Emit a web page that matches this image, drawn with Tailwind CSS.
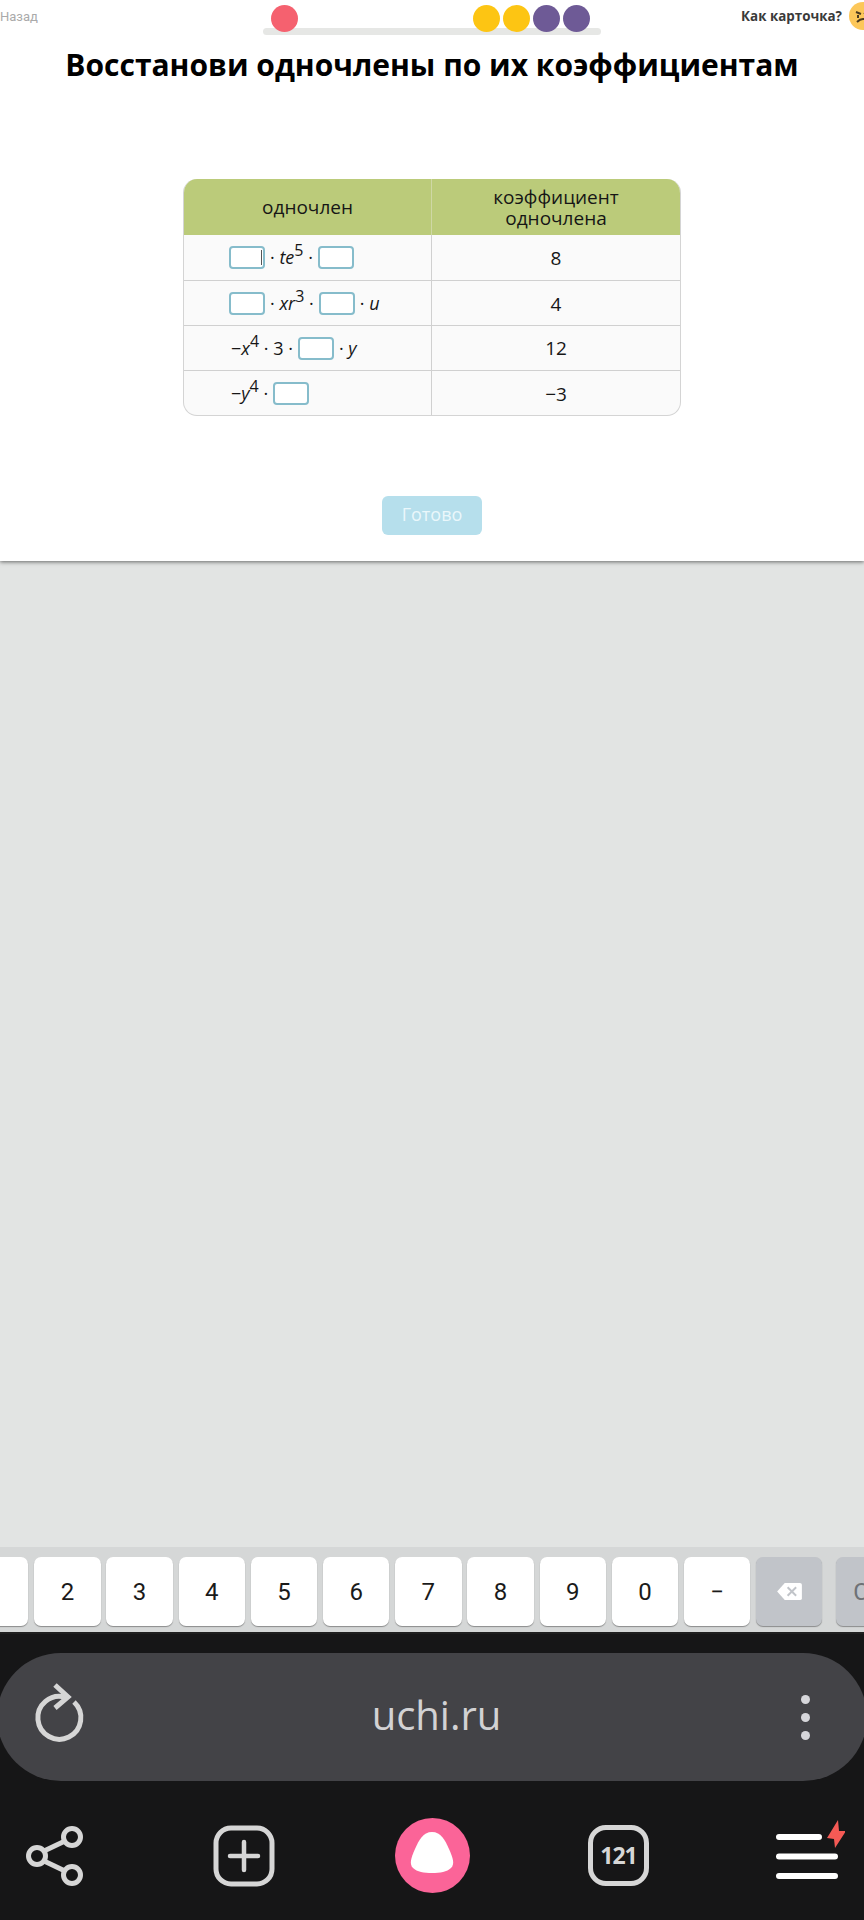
<!DOCTYPE html>
<html lang="ru">
<head>
    <meta charset="UTF-8">
    <title>uchi.ru</title>
    <script src="https://cdn.jsdelivr.net/npm/@tailwindcss/browser@4"></script>
</head>
<body class="w-[864px] h-[1920px] overflow-hidden flex flex-col bg-[#161617] font-['Open_Sans',sans-serif]">
    <!-- Card -->
    <section class="relative z-10 h-[561px] shrink-0 bg-white shadow-[0_1px_4px_rgba(0,0,0,0.55)] flex flex-col">
        <div class="relative h-[36px] flex justify-between items-start">
            <span class="mt-[8px] text-[13px] leading-[18px] text-[#aaaaaa] font-['Roboto',sans-serif]">Назад</span>
            <div class="absolute left-[263px] top-[28px] w-[338px] h-[7px] rounded-[4px] bg-[#e6e7e5]"></div>
            <div class="absolute left-[271px] top-[5px] w-[27px] h-[27px] rounded-full bg-[#f5616f]"></div>
            <div class="absolute left-[473px] top-[5px] w-[27px] h-[27px] rounded-full bg-[#fdc513]"></div>
            <div class="absolute left-[503px] top-[5px] w-[27px] h-[27px] rounded-full bg-[#fdc513]"></div>
            <div class="absolute left-[533px] top-[5px] w-[27px] h-[27px] rounded-full bg-[#6e5a96]"></div>
            <div class="absolute left-[563px] top-[5px] w-[27px] h-[27px] rounded-full bg-[#6e5a96]"></div>
            <div class="mt-[2px] flex items-center gap-[7px] mr-[-13px]">
                <span class="text-[13.4px] leading-[18px] font-bold text-[#3a3a3a]">Как карточка?</span>
                <svg width="28" height="28" viewBox="0 0 28 28">
                    <circle cx="14" cy="14" r="14" fill="#fcc75a"/>
                    <path d="M7 10l5 2M20 8l-5 4M8 20q6-6 12 0M9 13v3M18 13v3" fill="none" stroke="#4a3a20" stroke-width="2"/>
                </svg>
            </div>
        </div>
        <h1 class="mt-[10px] text-center text-[30px] leading-[38px] font-bold text-black">Восстанови одночлены по их коэффициентам</h1>

        <!-- Table -->
        <div class="mt-[95px] mx-auto w-[498px] rounded-[14px] border-x border-b border-[#d4d4d4] overflow-hidden text-[19px] text-[#161616] bg-[#fafafa] box-border">
            <div class="grid grid-cols-[248px_1fr] h-[56px] bg-[#bbcb7a] text-center">
                <div class="flex items-center justify-center border-r border-[#cfd8a5]">одночлен</div>
                <div class="flex items-center justify-center pt-[2px] leading-[21px]">коэффициент<br>одночлена</div>
            </div>
            <div class="grid grid-cols-[248px_1fr] h-[45px]">
                <div class="flex items-center pl-[45px] gap-[5px] text-[18px] border-r border-[#d0d0d0]">
                    <span class="relative w-[36px] h-[23px] rounded-[4px] border-2 border-[#86bccb] bg-white"><span class="absolute right-[1px] top-[2px] w-[1px] h-[15px] bg-[#555555]"></span></span>
                    <span>· <i>te</i><sup class="text-[16px]">5</sup> ·</span>
                    <span class="w-[36px] h-[23px] rounded-[4px] border-2 border-[#86bccb] bg-white"></span>
                </div>
                <div class="flex items-center justify-center pt-[2px]">8</div>
            </div>
            <div class="grid grid-cols-[248px_1fr] h-[45px] border-t border-[#d0d0d0]">
                <div class="flex items-center pl-[45px] gap-[5px] text-[18px] border-r border-[#d0d0d0]">
                    <span class="w-[36px] h-[23px] rounded-[4px] border-2 border-[#86bccb] bg-white"></span>
                    <span>· <i>xr</i><sup class="text-[16px]">3</sup> ·</span>
                    <span class="w-[36px] h-[23px] rounded-[4px] border-2 border-[#86bccb] bg-white"></span>
                    <span>· <i>u</i></span>
                </div>
                <div class="flex items-center justify-center pt-[2px]">4</div>
            </div>
            <div class="grid grid-cols-[248px_1fr] h-[45px] border-t border-[#d0d0d0]">
                <div class="flex items-center pl-[47px] gap-[5px] text-[18px] border-r border-[#d0d0d0]">
                    <span>−<i>x</i><sup class="text-[16px]">4</sup> · 3 ·</span>
                    <span class="w-[36px] h-[23px] rounded-[4px] border-2 border-[#86bccb] bg-white"></span>
                    <span>· <i>y</i></span>
                </div>
                <div class="flex items-center justify-center">12</div>
            </div>
            <div class="grid grid-cols-[248px_1fr] h-[45px] border-t border-[#d0d0d0]">
                <div class="flex items-center pl-[47px] gap-[5px] text-[18px] border-r border-[#d0d0d0]">
                    <span>−<i>y</i><sup class="text-[16px]">4</sup> ·</span>
                    <span class="w-[36px] h-[23px] rounded-[4px] border-2 border-[#86bccb] bg-white"></span>
                </div>
                <div class="flex items-center justify-center pt-[2px]">−3</div>
            </div>
        </div>

        <button class="mt-[80px] mx-auto w-[100px] h-[39px] pb-[2px] rounded-[6px] bg-[#b6dfec] text-[18px] text-[#eaf7fb]">Готово</button>
    </section>

    <!-- Empty page area -->
    <div class="h-[986px] shrink-0 bg-[#e2e4e3]"></div>

    <!-- Keyboard -->
    <div class="h-[85px] shrink-0 bg-[#d5d7d7] pt-[10px] flex gap-[5.8px] ml-[-38px] text-[24px] text-[#1a1a1a] font-['Roboto',sans-serif]">
        <div class="w-[66.4px] h-[69px] shrink-0 rounded-[7px] bg-white shadow-[0_1px_1px_rgba(0,0,0,0.35)]"></div>
        <div class="w-[66.4px] h-[69px] shrink-0 rounded-[7px] bg-white shadow-[0_1px_1px_rgba(0,0,0,0.35)] flex items-center justify-center">2</div>
        <div class="w-[66.4px] h-[69px] shrink-0 rounded-[7px] bg-white shadow-[0_1px_1px_rgba(0,0,0,0.35)] flex items-center justify-center">3</div>
        <div class="w-[66.4px] h-[69px] shrink-0 rounded-[7px] bg-white shadow-[0_1px_1px_rgba(0,0,0,0.35)] flex items-center justify-center">4</div>
        <div class="w-[66.4px] h-[69px] shrink-0 rounded-[7px] bg-white shadow-[0_1px_1px_rgba(0,0,0,0.35)] flex items-center justify-center">5</div>
        <div class="w-[66.4px] h-[69px] shrink-0 rounded-[7px] bg-white shadow-[0_1px_1px_rgba(0,0,0,0.35)] flex items-center justify-center">6</div>
        <div class="w-[66.4px] h-[69px] shrink-0 rounded-[7px] bg-white shadow-[0_1px_1px_rgba(0,0,0,0.35)] flex items-center justify-center">7</div>
        <div class="w-[66.4px] h-[69px] shrink-0 rounded-[7px] bg-white shadow-[0_1px_1px_rgba(0,0,0,0.35)] flex items-center justify-center">8</div>
        <div class="w-[66.4px] h-[69px] shrink-0 rounded-[7px] bg-white shadow-[0_1px_1px_rgba(0,0,0,0.35)] flex items-center justify-center">9</div>
        <div class="w-[66.4px] h-[69px] shrink-0 rounded-[7px] bg-white shadow-[0_1px_1px_rgba(0,0,0,0.35)] flex items-center justify-center">0</div>
        <div class="w-[66.4px] h-[69px] shrink-0 rounded-[7px] bg-white shadow-[0_1px_1px_rgba(0,0,0,0.35)] flex items-center justify-center">−</div>
        <div class="w-[66.4px] h-[69px] shrink-0 rounded-[7px] bg-[#c1c4c9] shadow-[0_1px_1px_rgba(0,0,0,0.35)] flex items-center justify-center">
            <svg width="25" height="19" viewBox="0 0 26 20">
                <path d="M8 1h16a2 2 0 0 1 2 2v14a2 2 0 0 1-2 2H8L0 10z" fill="#ffffff"/>
                <path d="M11 5.500l9 9M20 5.500l-9 9" stroke="#c1c4c9" stroke-width="2" fill="none"/>
            </svg>
        </div>
        <div class="ml-[8px] w-[66.4px] h-[69px] shrink-0 rounded-[7px] bg-[#c1c4c9] shadow-[0_1px_1px_rgba(0,0,0,0.35)] flex items-center pl-[17px] text-[#6f7276]">С</div>
    </div>

    <!-- Browser chrome -->
    <div class="flex-1 bg-[#161617] border-t-2 border-[#1f1f1f] flex flex-col overflow-hidden">
        <div class="mt-[19px] h-[128px] shrink-0 mx-[-3px] rounded-full bg-[#434347] flex items-center justify-between pl-[32px] pr-[57px]">
            <svg class="mt-[-6px]" width="60" height="62" viewBox="0 0 60 62" fill="none" stroke="#d6d6d6" stroke-width="5">
                <path d="M45 19A21.500 21.500 0 1 1 36 14"/>
                <path d="M26 2L39 14L26 25"/>
            </svg>
            <span class="mr-[17px] mb-[5px] text-[40px] leading-[54px] text-[#d2d2d4]">uchi.ru</span>
            <div class="flex flex-col gap-[9px]">
                <div class="w-[9px] h-[9px] rounded-full bg-[#d6d6da]"></div>
                <div class="w-[9px] h-[9px] rounded-full bg-[#d6d6da]"></div>
                <div class="w-[9px] h-[9px] rounded-full bg-[#d6d6da]"></div>
            </div>
        </div>
        <nav class="mt-[37px] flex justify-center items-center">
            <div class="w-[188px] shrink-0 flex justify-center">
                <svg width="60" height="62" viewBox="0 0 60 62" fill="none" stroke="#d6d6d6" stroke-width="5">
                    <circle cx="11" cy="31" r="8.500"/>
                    <circle cx="46" cy="12" r="8.500"/>
                    <circle cx="46" cy="50" r="8.500"/>
                    <path d="M18 26l21-10M18 36l21 10"/>
                </svg>
            </div>
            <div class="w-[188px] shrink-0 flex justify-center">
                <svg width="62" height="62" viewBox="0 0 62 62" fill="none" stroke="#d6d6d6">
                    <rect x="3" y="3" width="56" height="56" rx="15" stroke-width="5"/>
                    <path d="M17 31h28M31 17v28" stroke-width="4.500" stroke-linecap="round"/>
                </svg>
            </div>
            <div class="w-[188px] shrink-0 flex justify-center">
                <svg width="75" height="75" viewBox="0 0 75 75">
                    <circle cx="37.500" cy="37.500" r="37.500" fill="#fb6498"/>
                    <path d="M37 14C46 14 50 22 54 31C58 40 60 46 56 50C52 54 45 55 37 55C29 55 22 54 18 50C14 46 16 40 20 31C24 22 28 14 37 14Z" fill="#ffffff"/>
                </svg>
            </div>
            <div class="w-[188px] shrink-0 flex justify-center">
                <div class="mr-[3px] w-[61px] h-[61px] box-border rounded-[18px] border-[5px] border-[#d6d6d6] flex items-center justify-center text-[23px] font-bold tracking-[-1px] text-[#d6d6d6]">121</div>
            </div>
            <div class="w-[188px] shrink-0 flex justify-center">
                <svg class="ml-[2px]" width="72" height="72" viewBox="0 0 72 72">
                    <path d="M6 17h40M6 36.500h56M6 56h56" stroke="#ffffff" stroke-width="6" stroke-linecap="round"/>
                    <path d="M65 0L54 18L61 19L62 28L73 11L66 11Z" fill="#f55a55"/>
                </svg>
            </div>
        </nav>
    </div>
</body>
</html>
